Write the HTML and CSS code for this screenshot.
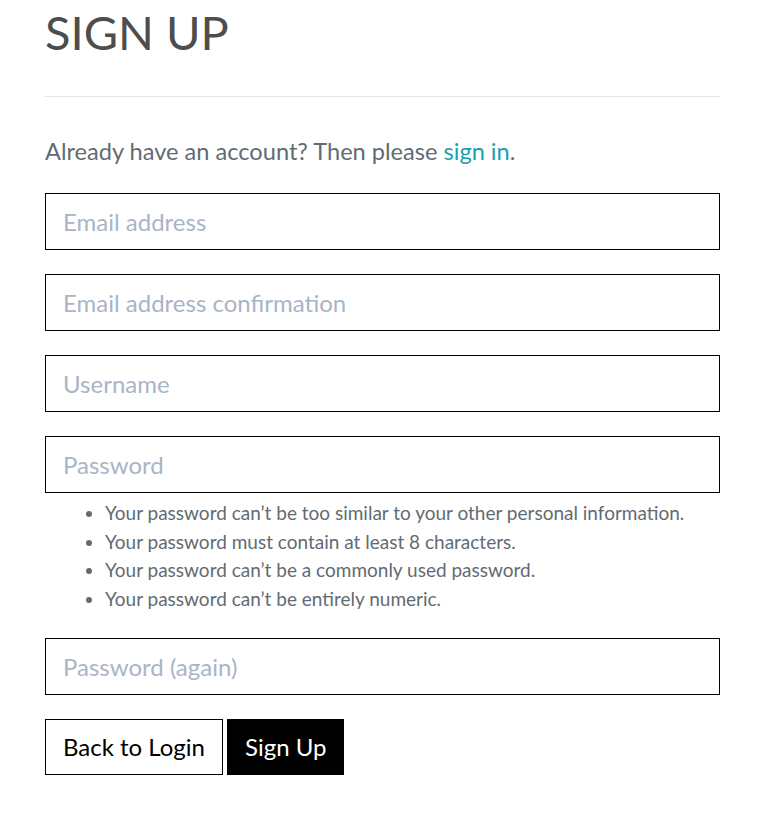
FILE: index.html
```html
<!DOCTYPE html>
<html>
<head>
<meta charset="utf-8">
<link rel="stylesheet" href="styles.css">
</head>
<body>
<main class="page">
  <h1 class="title">SIGN UP</h1>
  <hr class="rule">
  <p class="lead">Already have an account? Then please <a href="#" class="link">sign in</a>.</p>
  <form class="form">
    <input class="field" type="email" placeholder="Email address">
    <input class="field" type="email" placeholder="Email address confirmation">
    <input class="field" type="text" placeholder="Username">
    <div class="group">
      <input class="field" type="password" placeholder="Password">
      <ul class="help">
        <li>Your password can’t be too similar to your other personal information.</li>
        <li>Your password must contain at least 8 characters.</li>
        <li>Your password can’t be a commonly used password.</li>
        <li>Your password can’t be entirely numeric.</li>
      </ul>
    </div>
    <input class="field" type="password" placeholder="Password (again)">
    <div class="actions">
      <a href="#" class="btn btn-outline">Back to Login</a>
      <button type="button" class="btn btn-dark">Sign Up</button>
    </div>
  </form>
</main>
</body>
</html>
```
FILE: styles.css
```css
html, body {
  margin: 0;
  padding: 0;
  background: #fff;
}
body {
  font-family: Lato, "Open Sans", sans-serif;
  color: #626b73;
}
.page {
  width: 675px;
  margin-left: 45px;
}
.title {
  margin: 0;
  padding-top: 2px;
  font-size: 47px;
  font-weight: 400;
  line-height: 60px;
  color: #4d4d4d;
}
.rule {
  border: 0;
  border-top: 1px solid #e6e6e6;
  margin: 34px 0 0;
}
.lead {
  margin: 39px 0 0;
  font-size: 23.6px;
  line-height: 30px;
}
.link {
  color: #1a9fb0;
  text-decoration: none;
}
.form {
  display: flex;
  flex-direction: column;
  gap: 24px;
  margin-top: 27px;
}
.group {
  display: flex;
  flex-direction: column;
}
.field {
  box-sizing: border-box;
  width: 100%;
  height: 57px;
  border: 1px solid #000;
  border-radius: 0;
  padding: 0 17px;
  font-family: Lato, sans-serif;
  font-size: 24px;
  color: #333;
  outline: none;
  background: #fff;
}
.field::placeholder {
  color: #a9b5c4;
}
.help {
  margin: 6px 0 0;
  padding-left: 60px;
  font-size: 19px;
  line-height: 28.7px;
  color: #626b73;
}
.actions {
  display: flex;
  gap: 4px;
}
.btn {
  box-sizing: border-box;
  height: 56px;
  display: inline-flex;
  align-items: center;
  padding: 0 17px;
  font-family: Lato, sans-serif;
  font-size: 24px;
  text-decoration: none;
  border: 1px solid #000;
  border-radius: 0;
  cursor: pointer;
}
.btn-outline {
  background: #fff;
  color: #000;
}
.btn-dark {
  background: #000;
  color: #fff;
}
```
